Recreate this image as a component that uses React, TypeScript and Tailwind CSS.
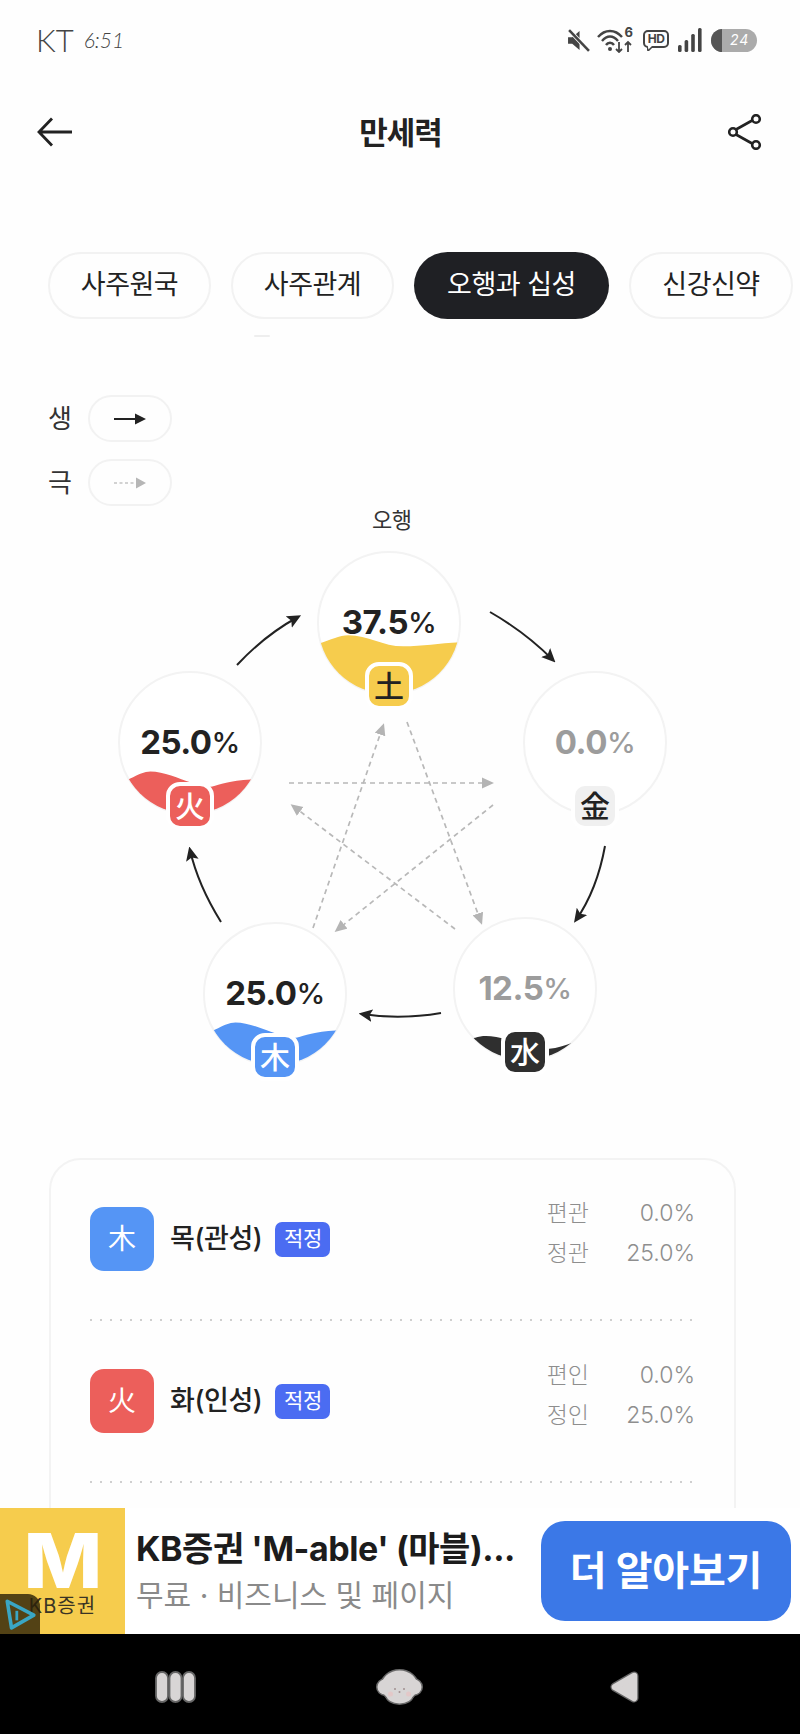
import React from "react";

const tabs = [
  { t: "사주원국", c: "w-[163px] border-2 border-[#f2f2f2] text-[#222]" },
  { t: "사주관계", c: "w-[163px] border-2 border-[#f2f2f2] text-[#222]" },
  { t: "오행과 십성", c: "w-[195px] bg-[#1f2024] text-white" },
  { t: "신강신약", c: "w-[164px] border-2 border-[#f2f2f2] text-[#222]" },
];

const WAVE_TOP = "M0 92C12 88 22 83 31 83C50 83 65 94 85 94C105 94 120 91 142 90V142H0Z";
const WAVE_MID = "M0 113L12 106C20 102 26 99 32 99C45 99 60 106 72 110C80 113 88 115 93 114C100 112 110 108 131 107L142 107V142H0Z";
const WAVE_LOW = "M0 122L22 119C30 116 40 117 55 121C70 127 85 131 95 130C103 129 110 127 118 124L142 122V142H0Z";

const circles = [
  { pos: "left-[317px] top-[45px]", n: "37.5", ch: "土", wave: WAVE_TOP, fill: "#f6cc4d", text: "text-[#222]", badge: "bg-[#f6cc4d] text-[#222]" },
  { pos: "left-[118px] top-[165px]", n: "25.0", ch: "火", wave: WAVE_MID, fill: "#ec5f5b", text: "text-[#222]", badge: "bg-[#ec5f5b] text-white" },
  { pos: "left-[523px] top-[165px]", n: "0.0", ch: "金", wave: "", fill: "", text: "text-[#9c9c9c]", badge: "bg-[#f0f0f0] text-[#222]" },
  { pos: "left-[203px] top-[416px]", n: "25.0", ch: "木", wave: WAVE_MID, fill: "#5595f5", text: "text-[#222]", badge: "bg-[#5595f5] text-white" },
  { pos: "left-[453px] top-[411px]", n: "12.5", ch: "水", wave: WAVE_LOW, fill: "#2f2f2f", text: "text-[#9c9c9c]", badge: "bg-[#2f2f2f] text-white" },
];

const rows = [
  { ch: "木", bg: "bg-[#5595f5]", label: "목(관성)", a: "편관", b: "정관" },
  { ch: "火", bg: "bg-[#ec5f5b]", label: "화(인성)", a: "편인", b: "정인" },
];

function Circle({ c }: { c: (typeof circles)[number] }) {
  return (
    <div className={`absolute w-[144px] h-[144px] ${c.pos}`}>
      <div className="absolute inset-0 rounded-full border-2 border-[#f3f3f3] bg-white" />
      {c.wave && (
        <svg viewBox="0 0 142 142" className="absolute inset-0 w-[144px] h-[144px]">
          <clipPath id={`clip-${c.ch}`}>
            <circle cx="71" cy="71" r="70" />
          </clipPath>
          <path d={c.wave} fill={c.fill} clipPath={`url(#clip-${c.ch})`} />
        </svg>
      )}
      <div className={`absolute inset-0 flex items-center justify-center font-bold text-[33px] tracking-[-0.5px] ${c.text}`}>
        {c.n}
        <span className="font-medium text-[29px]">%</span>
      </div>
      <div className={`absolute left-[48px] top-[111px] w-[48px] h-[48px] border-[4px] border-white rounded-[14px] flex items-center justify-center text-[30px] font-medium leading-none ${c.badge}`}>
        {c.ch}
      </div>
    </div>
  );
}

function DiagramArrows() {
  const solid = [
    "M237 665Q265 635 298 617",
    "M490 612Q525 632 553 660",
    "M605 846Q597 890 576 920",
    "M441 1013Q400 1020 362 1014",
    "M221 922Q198 885 190 850",
  ];
  const dashed = [
    "M289 783L491 783",
    "M313 928L383 726",
    "M407 722L481 922",
    "M493 805L337 930",
    "M455 929L293 806",
  ];
  return (
    <svg viewBox="0 506 800 652" className="absolute inset-0 w-[800px] h-[652px]">
      <defs>
        <marker id="hd" viewBox="0 0 12 12" refX="9" refY="6" markerWidth="14" markerHeight="14" markerUnits="userSpaceOnUse" orient="auto">
          <path d="M0 0.5L12 6L0 11.5L2.5 6Z" fill="#222" />
        </marker>
        <marker id="hg" viewBox="0 0 12 12" refX="9" refY="6" markerWidth="12" markerHeight="12" markerUnits="userSpaceOnUse" orient="auto">
          <path d="M0 0.5L12 6L0 11.5Z" fill="#b4b4b4" />
        </marker>
      </defs>
      {dashed.map((d) => (
        <path key={d} d={d} fill="none" stroke="#b8b8b8" strokeWidth="1.7" strokeDasharray="5 4" markerEnd="url(#hg)" />
      ))}
      {solid.map((d) => (
        <path key={d} d={d} fill="none" stroke="#222" strokeWidth="2" markerEnd="url(#hd)" />
      ))}
    </svg>
  );
}

function StatusBar() {
  return (
    <div className="h-[80px] flex items-center pl-[36px] pr-[43px] text-[#444]">
      <span className="text-[31px] font-light leading-none font-['Lato',sans-serif]">KT</span>
      <span className="ml-[10px] text-[21px] italic font-light leading-none font-['Lato',sans-serif] -mt-[2px]">6:51</span>
      <div className="ml-auto flex items-center">
        <svg viewBox="0 0 22 22" className="w-[23px] h-[23px]">
          <path d="M1 8H5L12 2V20L5 14H1Z" fill="#444" />
          <path d="M2 1L21 21" stroke="#fbfbfb" strokeWidth="4" />
          <path d="M2 1L21 21" stroke="#444" strokeWidth="2.4" />
        </svg>
        <div className="relative w-[36px] h-[25px] ml-[7px]">
          <svg viewBox="0 0 36 25" className="w-[36px] h-[25px]">
            <g fill="none" stroke="#444" strokeWidth="2.4">
              <path d="M1 9C8 1 18 1 25 9" />
              <path d="M5 13C10 7 16 7 21 13" />
              <path d="M9 17C11 14 15 14 17 17" />
            </g>
            <circle cx="13" cy="21" r="2" fill="#444" />
            <path d="M22 14V24M19 21L22 24L25 21M31 24V14M28 17L31 14L34 17" fill="none" stroke="#444" strokeWidth="1.8" />
          </svg>
          <span className="absolute right-0 -top-[2px] text-[13px] font-bold leading-none">6</span>
        </div>
        <div className="relative w-[26px] h-[21px] ml-[10px]">
          <div className="w-[26px] h-[18px] border-2 border-[#444] rounded-[5px] flex items-center justify-center text-[12px] font-bold leading-none tracking-[-0.5px]">HD</div>
          <svg viewBox="0 0 8 5" className="absolute left-[4px] top-[16px] w-[8px] h-[5px]">
            <path d="M0 0L1 5L6 0" fill="#fff" stroke="#444" strokeWidth="1.5" />
          </svg>
        </div>
        <svg viewBox="0 0 24 24" className="w-[24px] h-[24px] ml-[9px]">
          <g fill="#444">
            <rect x="0" y="17" width="3.6" height="7" rx="1.5" />
            <rect x="6.6" y="12" width="3.6" height="12" rx="1.5" />
            <rect x="13.2" y="6" width="3.6" height="18" rx="1.5" />
            <rect x="20" y="0" width="3.6" height="24" rx="1.5" />
          </g>
        </svg>
        <div className="w-[46px] h-[23px] ml-[9px] rounded-full bg-[#ababab] overflow-hidden flex items-center">
          <div className="w-[11px] h-full bg-[#555]" />
          <span className="ml-[8px] text-[14px] italic leading-none text-white tracking-[1px]">24</span>
        </div>
      </div>
    </div>
  );
}

function Header() {
  return (
    <div className="h-[104px] flex items-center justify-between pl-[37px] pr-[38px]">
      <svg viewBox="0 0 36 30" className="w-[36px] h-[30px]">
        <path d="M35 15H2M15 1.5L2 15L15 28.5" fill="none" stroke="#222" strokeWidth="2.8" />
      </svg>
      <span className="text-[31px] font-semibold text-[#222] tracking-[-1px] leading-none">만세력</span>
      <svg viewBox="0 0 34 36" className="w-[34px] h-[36px]">
        <g fill="none" stroke="#222" strokeWidth="2.6">
          <path d="M8 15.5L25 6M8 20.5L25 30" />
          <circle cx="28" cy="5" r="3.8" />
          <circle cx="5" cy="18" r="3.8" />
          <circle cx="28" cy="31" r="3.8" />
        </g>
      </svg>
    </div>
  );
}

export default function App() {
  return (
    <div className="w-[800px] h-[1734px] flex flex-col overflow-hidden bg-[#fefefe] font-['Inter','Noto_Sans_CJK_KR',sans-serif]">
      <div className="h-[1508px] overflow-hidden shrink-0">
        <StatusBar />
        <Header />

        <div className="mt-[68px] pl-[48px] flex gap-[20px]">
          {tabs.map((t) => (
            <div key={t.t} className={`h-[67px] shrink-0 rounded-full flex items-center justify-center text-[27px] tracking-[-0.5px] ${t.c}`}>
              {t.t}
            </div>
          ))}
        </div>
        <div className="mt-[16px] ml-[254px] w-[16px] h-[2px] rounded-full bg-[#eeeeee]" />

        <div className="mt-[58px] pl-[48px] flex flex-col gap-[17px]">
          <div className="flex items-center gap-[17px]">
            <span className="w-[23px] text-[26px] text-[#333] leading-none">생</span>
            <div className="w-[84px] h-[47px] rounded-full border-2 border-[#f2f2f2] flex items-center justify-center">
              <svg viewBox="0 0 32 12" className="w-[32px] h-[12px]">
                <path d="M0 6H22" stroke="#222" strokeWidth="2" />
                <path d="M21 0.5L32 6L21 11.5Z" fill="#222" />
              </svg>
            </div>
          </div>
          <div className="flex items-center gap-[17px]">
            <span className="w-[23px] text-[26px] text-[#333] leading-none">극</span>
            <div className="w-[84px] h-[47px] rounded-full border-2 border-[#f2f2f2] flex items-center justify-center">
              <svg viewBox="0 0 32 12" className="w-[32px] h-[12px]">
                <path d="M0 6H22" stroke="#c4c4c4" strokeWidth="1.6" strokeDasharray="3 2.5" />
                <path d="M22 0.5L32 6L22 11.5Z" fill="#b6b6b6" />
              </svg>
            </div>
          </div>
        </div>

        <div className="relative h-[652px]">
          <div className="pl-[372px] h-[28px] flex items-center text-[22px] text-[#333] tracking-[-0.5px]">오행</div>
          <DiagramArrows />
          {circles.map((c) => (
            <Circle key={c.ch} c={c} />
          ))}
        </div>

        <div className="ml-[49px] w-[687px] h-[500px] border-2 border-[#f3f3f3] rounded-[32px] px-[39px] pt-[47px]">
          {rows.map((r) => (
            <div key={r.ch}>
              <div className="flex items-center h-[64px]">
                <div className={`w-[64px] h-[64px] rounded-[14px] flex items-center justify-center text-white text-[28px] leading-none ${r.bg}`}>{r.ch}</div>
                <span className="ml-[16px] text-[27px] font-medium text-[#222] tracking-[-0.4px]">{r.label}</span>
                <span className="ml-[13px] w-[55px] h-[35px] rounded-[7px] bg-[#4b6cf2] text-white text-[21px] flex items-center justify-center tracking-[-0.5px]">적정</span>
                <div className="ml-auto -mt-[12px] grid grid-cols-[auto_106px] gap-y-[10px] text-[#8e8e8e] text-[23px] leading-[30px] font-light">
                  <span>{r.a}</span>
                  <span className="text-right">0.0%</span>
                  <span>{r.b}</span>
                  <span className="text-right">25.0%</span>
                </div>
              </div>
              <div className="mt-[48px] mb-[48px] h-[2px] bg-[radial-gradient(circle,#cfcfcf_1px,transparent_1.2px)] bg-[length:10px_2px] bg-[position:-4px_0]" />
            </div>
          ))}
        </div>
      </div>

      <div className="relative h-[126px] shrink-0 bg-white flex items-center">
        <div className="w-[125px] h-[126px] bg-[#f6cc4d] flex flex-col items-center">
          <div className="mt-[25px] h-[54px] flex items-center text-[76px] font-extrabold text-white leading-[54px] scale-x-[1.1]">M</div>
          <div className="mt-[7px] h-[24px] flex items-center text-[20px] text-[#3a3424] leading-none tracking-[1px]">KB증권</div>
        </div>
        <div className="ml-[11px] flex flex-col gap-[8px]">
          <div className="text-[34px] font-bold text-[#1c1c1c] leading-[40px] tracking-[-0.45px] whitespace-nowrap">KB증권 'M-able' (마블)...</div>
          <div className="text-[30px] text-[#8a8a8a] leading-[36px] whitespace-nowrap">무료 · 비즈니스 및 페이지</div>
        </div>
        <div className="ml-auto mr-[9px] w-[250px] h-[100px] rounded-[24px] bg-[#3b78e7] flex items-center justify-center text-white text-[40px] font-bold tracking-[-0.2px]">더 알아보기</div>
        <div className="absolute left-0 bottom-0 w-[40px] h-[40px] rounded-tr-[12px] bg-[#2a1f08]/80 flex items-center justify-center">
          <svg viewBox="0 0 32 32" className="w-[34px] h-[34px]">
            <path d="M4 4L29 17L8 29Z" fill="none" stroke="#3aa6c4" strokeWidth="3.4" strokeLinejoin="round" />
            <path d="M13 13V22" stroke="#3aa6c4" strokeWidth="2.6" />
          </svg>
        </div>
      </div>

      <div className="h-[100px] shrink-0 bg-black flex items-center pl-[155px] pt-[6px]">
        <svg viewBox="0 0 41 32" className="w-[41px] h-[32px]">
          <g fill="#d8d5d5" stroke="#666" strokeWidth="1.8">
            <rect x="1" y="1" width="12" height="30" rx="6" />
            <rect x="14.5" y="1" width="12" height="30" rx="6" />
            <rect x="28" y="1" width="12" height="30" rx="6" />
          </g>
        </svg>
        <svg viewBox="0 0 49 36" className="ml-[179px] w-[49px] h-[36px]">
          <g fill="#d8d5d5" stroke="#6a6a6a" strokeWidth="3">
            <ellipse cx="24.5" cy="17" rx="18" ry="15.5" />
            <circle cx="10" cy="18" r="7.5" />
            <circle cx="39" cy="18" r="7.5" />
            <ellipse cx="24.5" cy="26" rx="13" ry="8.5" />
          </g>
          <g fill="#d8d5d5">
            <ellipse cx="24.5" cy="17" rx="18" ry="15.5" />
            <circle cx="10" cy="18" r="7.5" />
            <circle cx="39" cy="18" r="7.5" />
            <ellipse cx="24.5" cy="26" rx="13" ry="8.5" />
          </g>
          <g fill="#a09090">
            <circle cx="20" cy="20" r="1" />
            <circle cx="29" cy="20" r="1" />
            <circle cx="24.5" cy="23" r="1" />
          </g>
          <g fill="#e3c8c8">
            <circle cx="15.5" cy="25" r="2.5" />
            <circle cx="33.5" cy="25" r="2.5" />
          </g>
        </svg>
        <svg viewBox="0 0 30 34" className="ml-[185px] w-[30px] h-[34px]">
          <path d="M25 6L6 17L25 28Z" fill="#d8d5d5" stroke="#666" strokeWidth="9" strokeLinejoin="round" />
          <path d="M25 6L6 17L25 28Z" fill="#d8d5d5" stroke="#d8d5d5" strokeWidth="6.5" strokeLinejoin="round" />
        </svg>
      </div>
    </div>
  );
}
